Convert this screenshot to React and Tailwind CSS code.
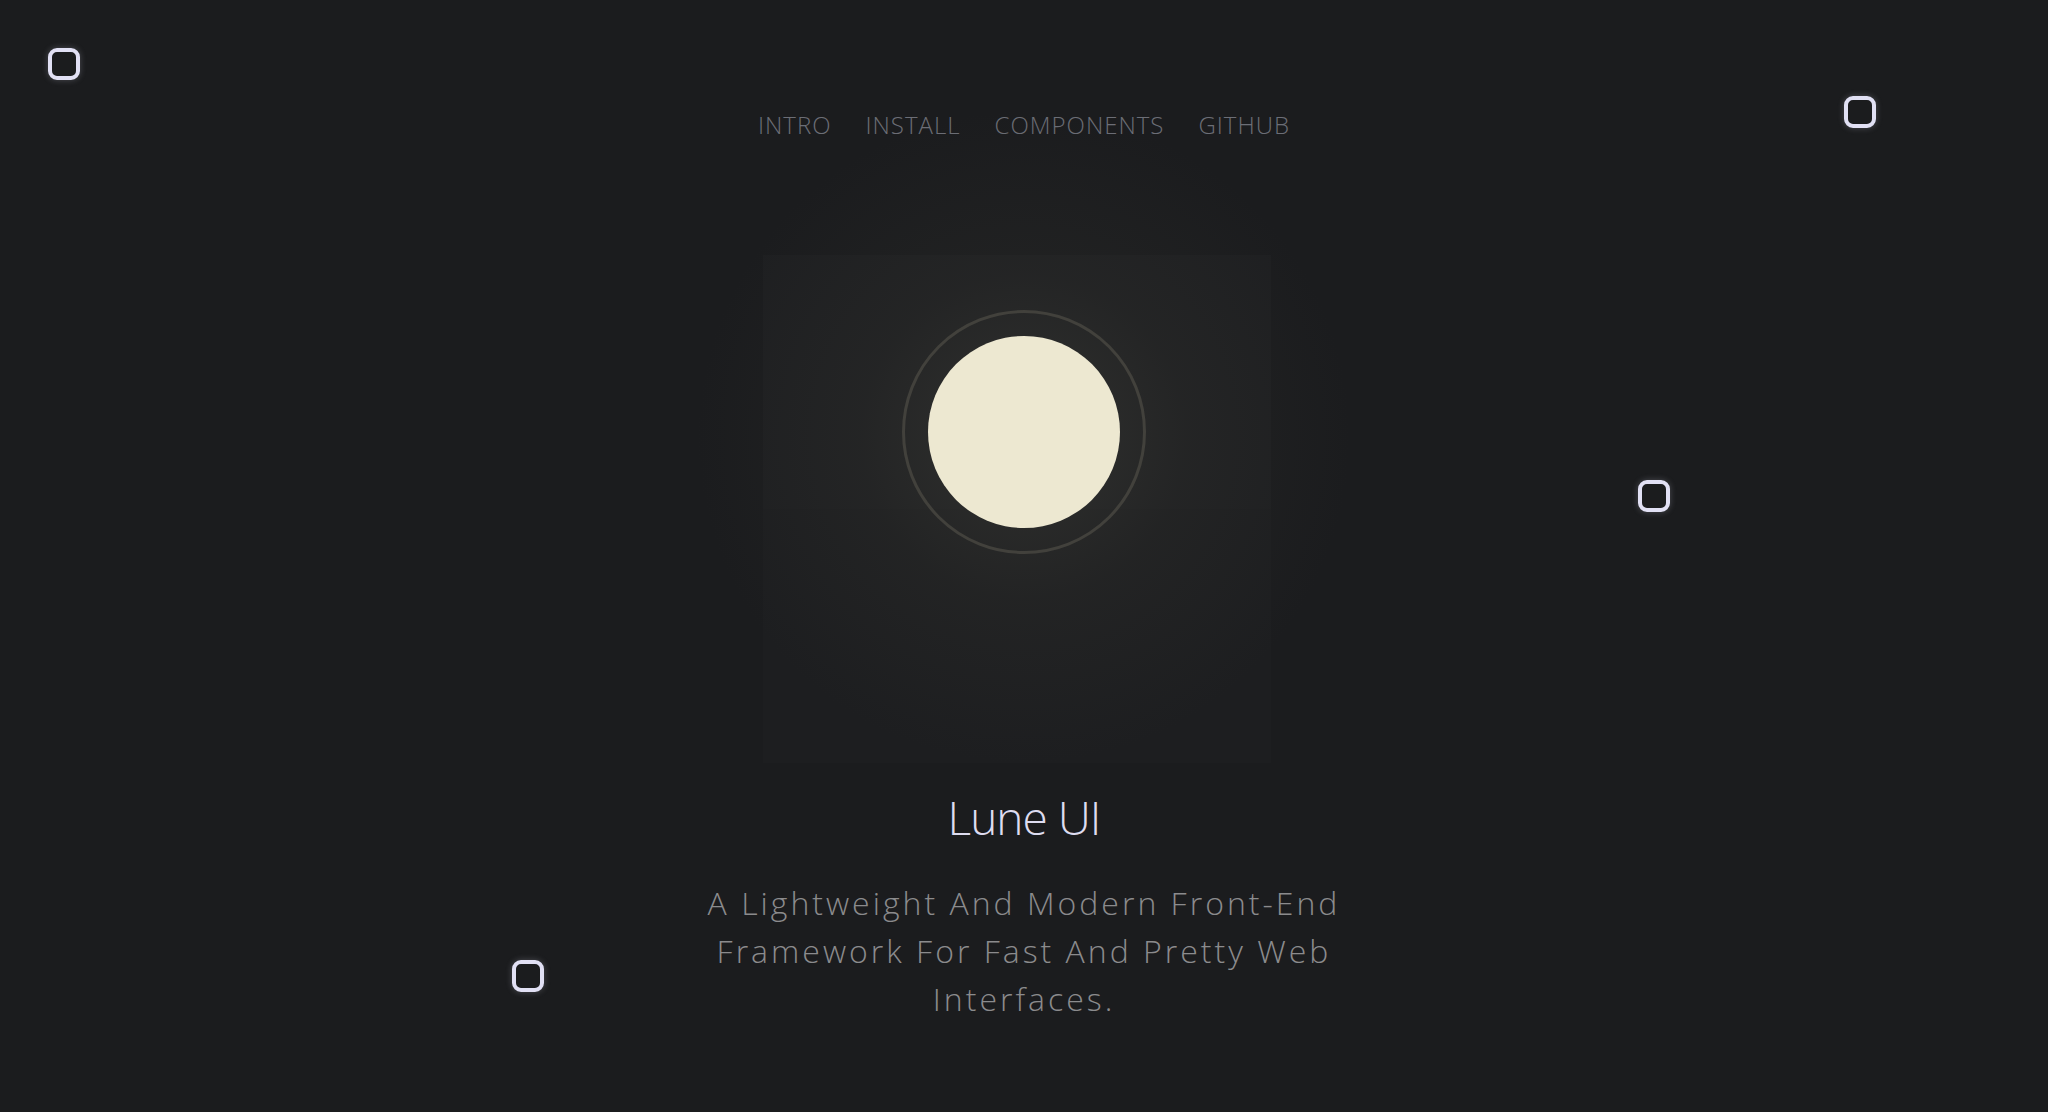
const squares = [
  { left: 'left-[48px]', top: 'top-[48px]' },
  { left: 'left-[1844px]', top: 'top-[96px]' },
  { left: 'left-[1638px]', top: 'top-[480px]' },
  { left: 'left-[512px]', top: 'top-[960px]' },
];

const links = ['Intro', 'Install', 'Components', 'Github'];

function Square({ pos }) {
  return (
    <span
      className={`absolute ${pos.left} ${pos.top} h-8 w-8 rounded-[9px] border-4 border-[#e1e0f4] shadow-[0_0_6px_rgba(225,224,244,0.25)]`}
    />
  );
}

export default function App() {
  return (
    <div className="relative h-[1112px] w-full overflow-hidden bg-[#1b1c1e] font-['Open_Sans',sans-serif]">
      {squares.map((s, i) => (
        <Square key={i} pos={s} />
      ))}

      <nav className="flex justify-center gap-[34px] pt-[107px]">
        {links.map((l) => (
          <a key={l} href="#" className="text-[24px] leading-[36px] font-light uppercase tracking-[1px] text-[#6c6e76]">
            {l}
          </a>
        ))}
      </nav>

      {/* moon + glow */}
      <div className="relative flex h-[644px] flex-col items-center pt-[167px]">
        <div className="absolute left-1/2 top-[-36px] h-[660px] w-[660px] -translate-x-1/2 rounded-full bg-[radial-gradient(circle,rgba(64,64,58,0.5)_0%,rgba(50,50,46,0.25)_35%,rgba(27,28,30,0)_70%)]" />
        <div className="absolute left-[763px] top-[112px] h-[508px] w-[508px] bg-[rgba(255,255,255,0.012)]" />
        <div className="absolute left-[763px] top-[112px] h-[254px] w-[508px] bg-[rgba(255,255,255,0.008)]" />
        <div className="relative flex h-[244px] w-[244px] items-center justify-center rounded-full border-[3px] border-[#42413c]">
          <div className="h-[192px] w-[192px] rounded-full bg-[#ede8d1]" />
        </div>
      </div>

      <h1 className="text-center text-[46px] leading-[60px] font-light tracking-[-1px] text-[#dedcf0]">Lune UI</h1>
      <p className="mx-auto mt-[32px] w-[680px] text-center text-[32px] leading-[48px] font-light tracking-[3px] text-[#8b8b8d]">
        A Lightweight And Modern Front-End Framework For Fast And Pretty Web Interfaces.
      </p>
    </div>
  );
}
